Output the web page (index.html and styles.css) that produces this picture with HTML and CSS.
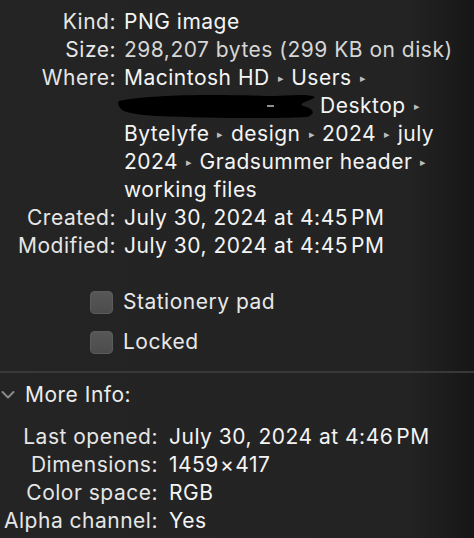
FILE: index.html
```html
<!DOCTYPE html>
<html lang="en">
<head>
<meta charset="utf-8">
<link rel="stylesheet" href="styles.css">
</head>
<body>
<div class="panel">
  <div class="info">
    <div class="label">Kind:</div>
    <div class="value">PNG image</div>
    <div class="label">Size:</div>
    <div class="value dim">298,207 bytes (299 KB on disk)</div>
    <div class="label">Where:</div>
    <div class="value path">
      <div class="line">Macintosh HD<span class="sep">▸</span>Users<span class="sep">▸</span></div>
      <div class="line redacted-line"><svg class="scribble" width="200" height="28" viewBox="0 0 200 28"><path d="M2 9 C30 3 90 2 150 4 C170 4 190 1 198 5 C194 9 180 11 186 14 C196 16 200 22 190 25 C150 27 90 26 40 24 C20 23 6 20 4 17 C2 14 0 12 2 9 Z" fill="#000"/><path d="M150 14 L157 14" stroke="#cfcfcf" stroke-width="1.4"/></svg>Desktop<span class="sep">▸</span></div>
      <div class="line">Bytelyfe<span class="sep">▸</span>design<span class="sep">▸</span>2024<span class="sep">▸</span>july</div>
      <div class="line">2024<span class="sep">▸</span>Gradsummer header<span class="sep">▸</span></div>
      <div class="line">working files</div>
    </div>
    <div class="label">Created:</div>
    <div class="value">July 30, 2024 at 4:45<span class="thin"> </span>PM</div>
    <div class="label">Modified:</div>
    <div class="value">July 30, 2024 at 4:45<span class="thin"> </span>PM</div>
  </div>

  <div class="checks">
    <label class="check"><span class="box"></span>Stationery pad</label>
    <label class="check"><span class="box"></span>Locked</label>
  </div>

  <div class="divider"></div>

  <div class="section-head">
    <svg class="chev" width="14" height="10" viewBox="0 0 14 10"><path d="M1.5 2 L7 7.5 L12.5 2" fill="none" stroke="#8a8a8a" stroke-width="2" stroke-linecap="round" stroke-linejoin="round"/></svg>
    <span>More Info:</span>
  </div>

  <div class="more">
    <div class="label">Last opened:</div>
    <div class="value">July 30, 2024 at 4:46<span class="thin"> </span>PM</div>
    <div class="label">Dimensions:</div>
    <div class="value">1459<span class="times">×</span>417</div>
    <div class="label">Color space:</div>
    <div class="value">RGB</div>
    <div class="label">Alpha channel:</div>
    <div class="value">Yes</div>
  </div>
</div>
</body>
</html>
```

FILE: styles.css
```css
html, body {
  margin: 0;
  padding: 0;
}
body {
  width: 474px;
  height: 538px;
  overflow: hidden;
  background: linear-gradient(to right, #242424 0%, #232323 86%, #1c1c1c 94%, #161616 100%);
  font-family: Inter, "Noto Sans", "Liberation Sans", sans-serif;
  font-size: 21px;
  letter-spacing: 0.5px;
  line-height: 28px;
  color: #ececec;
}
.panel {
  padding-top: 8px;
}
.info {
  display: grid;
  grid-template-columns: 116px 1fr;
  column-gap: 8px;
}
.label {
  text-align: right;
  color: #e6e6e6;
  white-space: nowrap;
}
.value {
  color: #f4f4f4;
  white-space: nowrap;
}
.value.dim {
  color: #d6d6d6;
}
.line {
  height: 28px;
  display: flex;
  align-items: center;
}
.sep {
  font-size: 11px;
  line-height: 1;
  color: #bdbdbd;
  margin: 0 7px 0 8px;
}
.scribble {
  margin-left: -7px;
  margin-right: 3px;
  display: block;
}
.thin {
  font-size: 9px;
  line-height: 1;
}
.times {
  margin: 0 1px;
}
.checks {
  margin-top: 22px;
  padding-left: 90px;
  display: flex;
  flex-direction: column;
}
.check {
  height: 40px;
  display: flex;
  align-items: center;
  gap: 10px;
  color: #e8e8e8;
}
.box {
  width: 23px;
  height: 23px;
  border-radius: 5px;
  background: linear-gradient(to bottom, #585858, #4b4b4b);
  box-shadow: inset 0 0 0 1px #5c5c5c;
}
.divider {
  margin-top: 9px;
  height: 2px;
  background: #383838;
}
.section-head {
  margin-top: 8px;
  height: 28px;
  display: flex;
  align-items: center;
  gap: 10px;
  padding-left: 1px;
}
.more {
  margin-top: 14px;
  display: grid;
  grid-template-columns: 158px 1fr;
  column-gap: 11px;
}
```
